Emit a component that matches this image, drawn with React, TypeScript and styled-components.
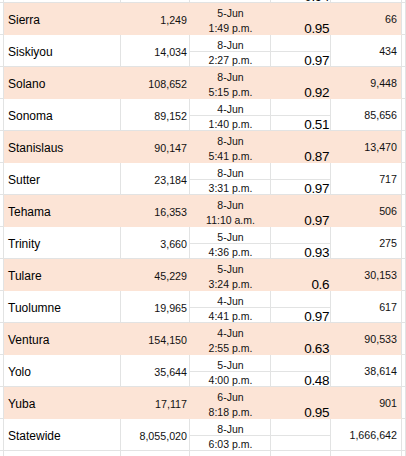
import React from "react";
import styled, { createGlobalStyle } from "styled-components";

const GlobalStyle = createGlobalStyle`
  html, body {
    margin: 0;
    padding: 0;
    background: #ffffff;
    overflow: hidden;
  }
  * {
    box-sizing: border-box;
  }
`;

const GRID = "#e2e3e3";
const FILL = "#fce4d6";
const FONT = `"Liberation Sans", Arial, sans-serif`;

type RowData = {
  name: string;
  count: string;
  date: string;
  time: string;
  ratio: string;
  total: string;
  fill: boolean;
};

const rows: RowData[] = [
  { name: "Sierra", count: "1,249", date: "5-Jun", time: "1:49 p.m.", ratio: "0.95", total: "66", fill: true },
  { name: "Siskiyou", count: "14,034", date: "8-Jun", time: "2:27 p.m.", ratio: "0.97", total: "434", fill: false },
  { name: "Solano", count: "108,652", date: "8-Jun", time: "5:15 p.m.", ratio: "0.92", total: "9,448", fill: true },
  { name: "Sonoma", count: "89,152", date: "4-Jun", time: "1:40 p.m.", ratio: "0.51", total: "85,656", fill: false },
  { name: "Stanislaus", count: "90,147", date: "8-Jun", time: "5:41 p.m.", ratio: "0.87", total: "13,470", fill: true },
  { name: "Sutter", count: "23,184", date: "8-Jun", time: "3:31 p.m.", ratio: "0.97", total: "717", fill: false },
  { name: "Tehama", count: "16,353", date: "8-Jun", time: "11:10 a.m.", ratio: "0.97", total: "506", fill: true },
  { name: "Trinity", count: "3,660", date: "5-Jun", time: "4:36 p.m.", ratio: "0.93", total: "275", fill: false },
  { name: "Tulare", count: "45,229", date: "5-Jun", time: "3:24 p.m.", ratio: "0.6", total: "30,153", fill: true },
  { name: "Tuolumne", count: "19,965", date: "4-Jun", time: "4:41 p.m.", ratio: "0.97", total: "617", fill: false },
  { name: "Ventura", count: "154,150", date: "4-Jun", time: "2:55 p.m.", ratio: "0.63", total: "90,533", fill: true },
  { name: "Yolo", count: "35,644", date: "5-Jun", time: "4:00 p.m.", ratio: "0.48", total: "38,614", fill: false },
  { name: "Yuba", count: "17,117", date: "6-Jun", time: "8:18 p.m.", ratio: "0.95", total: "901", fill: true },
  { name: "Statewide", count: "8,055,020", date: "8-Jun", time: "6:03 p.m.", ratio: "", total: "1,666,642", fill: false },
];

const Sheet = styled.div`
  width: 406px;
  height: 456px;
  overflow: hidden;
  display: flex;
  flex-direction: column;
  background: #ffffff;
  font-family: ${FONT};
  color: #111;
`;

// the cut-off row above the first visible one
const Peek = styled.div`
  height: 3px;
  flex-shrink: 0;
  overflow: hidden;
  display: flex;
  flex-direction: column;
  justify-content: flex-end;
`;

const Row = styled.div`
  display: grid;
  grid-template-columns: 4px 117px 69px 81px 60px 71px 4px;
  height: 32px;
  flex-shrink: 0;
`;

const Edge = styled.div`
  border-right: 1px solid ${GRID};
  border-bottom: 1px solid ${GRID};
`;

const Cell = styled.div<{ $fill: boolean }>`
  display: flex;
  background: ${(p) => (p.$fill ? FILL : "transparent")};
  border-right: 1px solid ${(p) => (p.$fill ? FILL : GRID)};
  border-bottom: 1px solid ${(p) => (p.$fill ? FILL : GRID)};
  white-space: nowrap;
`;

const Name = styled(Cell)`
  padding: 10px 0 0 4px;
  font-size: 12px;
  line-height: 14px;
  color: #000;
`;

const Count = styled(Cell)`
  justify-content: flex-end;
  padding: 11px 2px 0 0;
  font-size: 10.7px;
  line-height: 12px;
`;

const Total = styled(Cell)`
  justify-content: flex-end;
  padding: 10px 4px 0 0;
  font-size: 10.7px;
  line-height: 12px;
  border-right-color: ${GRID};
`;

const Split = styled.div<{ $fill: boolean }>`
  display: grid;
  grid-template-rows: 17px 15px;
  background: ${(p) => (p.$fill ? FILL : "transparent")};
  border-right: 1px solid ${(p) => (p.$fill ? FILL : GRID)};
`;

const Half = styled.div<{ $fill: boolean; $align: "center" | "right" }>`
  display: flex;
  align-items: flex-end;
  justify-content: ${(p) => (p.$align === "center" ? "center" : "flex-end")};
  border-bottom: 1px solid ${(p) => (p.$fill ? FILL : GRID)};
  white-space: nowrap;
`;

const DateText = styled.span`
  font-size: 10.5px;
  line-height: 12px;
  padding-left: 1px;
`;

const Ratio = styled.span`
  font-size: 13.5px;
  line-height: 11px;
  letter-spacing: -0.4px;
  padding-right: 1px;
  color: #000;
`;

const SheetRow: React.FC<{ data: RowData }> = ({ data }) => {
  const { name, count, date, time, ratio, total, fill } = data;
  return (
    <Row>
      <Edge />
      <Name $fill={fill}>{name}</Name>
      <Count $fill={fill}>{count}</Count>
      <Split $fill={fill}>
        <Half $fill={fill} $align="center">
          <DateText>{date}</DateText>
        </Half>
        <Half $fill={fill} $align="center">
          <DateText>{time}</DateText>
        </Half>
      </Split>
      <Split $fill={fill}>
        <Half $fill={fill} $align="right" />
        <Half $fill={fill} $align="right">
          <Ratio>{ratio}</Ratio>
        </Half>
      </Split>
      <Total $fill={fill}>{total}</Total>
      <Edge />
    </Row>
  );
};

const App: React.FC = () => {
  return (
    <>
      <GlobalStyle />
      <Sheet>
        <Peek>
          <SheetRow
            data={{ name: "", count: "", date: "", time: "", ratio: "0.94", total: "", fill: false }}
          />
        </Peek>
        {rows.map((r) => (
          <SheetRow key={r.name} data={r} />
        ))}
        <SheetRow
          data={{ name: "", count: "", date: "", time: "", ratio: "", total: "", fill: false }}
        />
      </Sheet>
    </>
  );
};

export default App;
